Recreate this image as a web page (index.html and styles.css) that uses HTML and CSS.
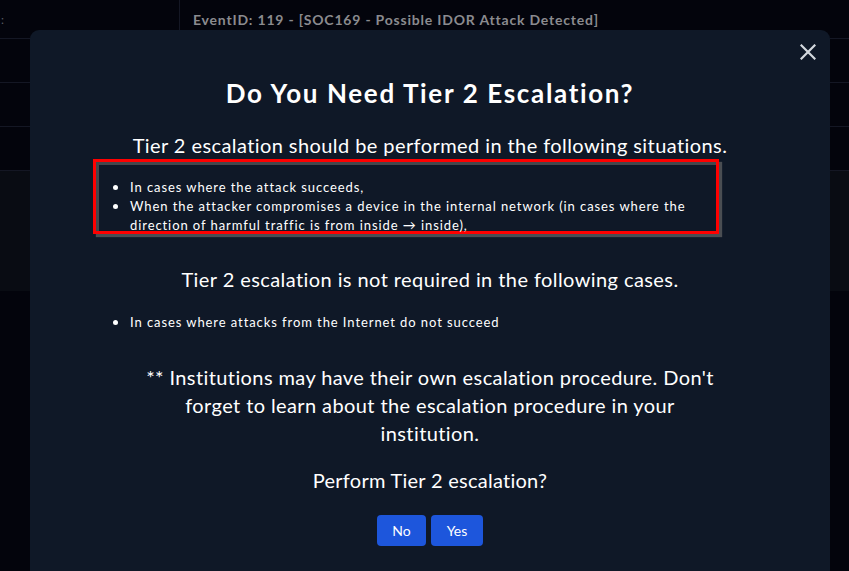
FILE: index.html
```html
<!DOCTYPE html>
<html lang="en">
<head>
<meta charset="utf-8">
<title>Tier 2 Escalation</title>
<link rel="stylesheet" href="styles.css">
</head>
<body>
<div class="page">
  <div class="table">
    <div class="row head">
      <div class="cell first">:</div>
      <div class="cell second">EventID: 119 - [SOC169 - Possible IDOR Attack Detected]</div>
    </div>
    <div class="row"></div>
    <div class="row"></div>
    <div class="row"></div>
    <div class="row detail"></div>
  </div>

  <div class="modal">
    <button class="close" aria-label="Close">
      <svg width="16" height="16" viewBox="0 0 16 16"><path d="M1.5 1.5 L14.5 14.5 M14.5 1.5 L1.5 14.5" stroke="#d4d8de" stroke-width="2.2" stroke-linecap="square" fill="none"/></svg>
    </button>
    <h2 class="title">Do You Need Tier 2 Escalation?</h2>
    <p class="lead">Tier 2 escalation should be performed in the following situations.</p>
    <ul class="list highlight">
      <li>In cases where the attack succeeds,</li>
      <li>When the attacker compromises a device in the internal network (in cases where the<br>direction of harmful traffic is from inside → inside),</li>
    </ul>
    <p class="lead second-lead">Tier 2 escalation is not required in the following cases.</p>
    <ul class="list plain">
      <li>In cases where attacks from the Internet do not succeed</li>
    </ul>
    <p class="note">** Institutions may have their own escalation procedure. Don't<br>forget to learn about the escalation procedure in your<br>institution.</p>
    <p class="ask">Perform Tier 2 escalation?</p>
    <div class="actions">
      <button class="btn no">No</button>
      <button class="btn yes">Yes</button>
    </div>
  </div>
</div>
</body>
</html>
```

FILE: styles.css
```css
* { box-sizing: border-box; }
html, body {
  margin: 0;
  padding: 0;
  height: 100%;
  background: #03040c;
  overflow: hidden;
  font-family: "Lato", "Noto Sans", sans-serif;
}
.page {
  position: relative;
  width: 849px;
  height: 571px;
  overflow: hidden;
}
.table {
  display: flex;
  flex-direction: column;
}
.row {
  height: 44px;
  border-bottom: 1px solid #141724;
  display: flex;
}
.row.head {
  height: 39px;
}
.row.detail {
  height: 120px;
  background: #090c13;
  border-bottom: none;
}
.cell {
  display: flex;
  align-items: center;
}
.cell.first {
  width: 180px;
  border-right: 1px solid #141724;
  color: #5a5d66;
  font-size: 12px;
  padding-left: 1px;
}
.cell.second {
  padding-left: 13px;
  color: #8b8b8f;
  font-weight: 700;
  font-size: 14px;
  letter-spacing: 0.8px;
}
.modal {
  position: absolute;
  left: 30px;
  top: 30px;
  width: 800px;
  height: 541px;
  background: #0f1827;
  border-radius: 9px 9px 0 0;
  padding: 47px 0 0 0;
  color: #ffffff;
  text-align: center;
}
.close {
  position: absolute;
  top: 8px;
  right: 8px;
  width: 28px;
  height: 28px;
  background: none;
  border: none;
  padding: 0;
  display: flex;
  align-items: center;
  justify-content: center;
  cursor: pointer;
}
.title {
  margin: 0;
  font-size: 26px;
  line-height: 32px;
  font-weight: 700;
  letter-spacing: 1.65px;
}
.lead {
  margin: 22px 0 0;
  font-size: 20px;
  line-height: 28px;
  font-weight: 400;
  letter-spacing: 0.42px;
}
.second-lead {
  margin-top: 31px;
  margin-bottom: 0;
}
.list {
  list-style: none;
  margin: 0 0 0 63px;
  width: 626px;
  text-align: left;
  padding: 16px 0 0 34px;
  border: 3px solid transparent;
  font-size: 13px;
  line-height: 19px;
  letter-spacing: 0.92px;
}
.list li {
  position: relative;
}
.list li::before {
  content: "";
  position: absolute;
  left: -17px;
  top: 7px;
  width: 5px;
  height: 5px;
  border-radius: 50%;
  background: #ffffff;
}
.highlight {
  height: 75px;
  border-color: #ff0000;
  box-shadow: inset 3px 3px 0 #44474c, 3px 3px 1px #4a4d52;
}
.plain {
  margin-top: 17px;
  padding-top: 0;
  padding-bottom: 0;
}
.note {
  margin: 28px auto 0;
  font-size: 20px;
  line-height: 28px;
  letter-spacing: 0.4px;
}
.ask {
  margin: 19px 0 0;
  font-size: 20px;
  line-height: 28px;
  letter-spacing: 0.27px;
}
.actions {
  margin-top: 21px;
  display: flex;
  justify-content: center;
  gap: 5px;
}
.btn {
  height: 31px;
  border: none;
  border-radius: 4px;
  background: #1d56dc;
  color: #ffffff;
  font-family: inherit;
  font-size: 14px;
  padding: 0;
}
.btn.no { width: 49px; }
.btn.yes { width: 52px; }
```
